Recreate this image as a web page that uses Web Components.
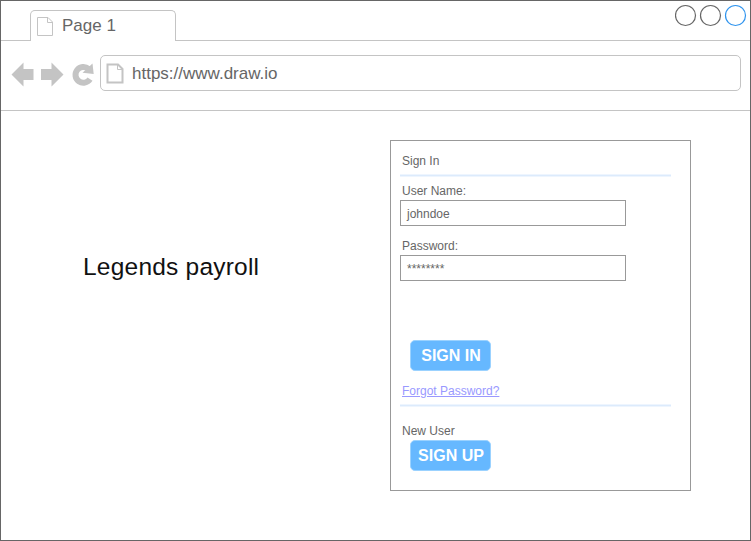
<!DOCTYPE html>
<html lang="en">
<head>
<meta charset="utf-8">
<title>Legends payroll</title>
<style>
html, body { margin: 0; height: 100%; }
body { font-family: "Liberation Sans", Arial, sans-serif; color: #666; background: #fff; overflow: hidden; }
</style>
</head>
<body>
<browser-window>
  <tab-strip slot="chrome">Page 1</tab-strip>
  <address-bar slot="chrome">https://www.draw.io</address-bar>
  <page-title>Legends payroll</page-title>
  <sign-in-card></sign-in-card>
</browser-window>
<script>
function define(name, html) {
  const template = document.createElement('template');
  template.innerHTML = html;
  customElements.define(name, class extends HTMLElement {
    constructor() {
      super();
      this.attachShadow({ mode: 'open' }).append(template.content.cloneNode(true));
    }
  });
}

define('browser-window', `
<style>
:host { display: flex; flex-direction: column; box-sizing: border-box; width: 751px; height: 541px; border: 1px solid #666; background: #fff; }
main { flex: 1; display: flex; align-items: flex-start; justify-content: space-between; padding: 29px 59px 0 82px; }
</style>
<slot name="chrome"></slot>
<main><slot></slot></main>`);

define('page-icon', `
<style>
:host { display: block; flex: none; line-height: 0; color: #c4c4c4; }
svg { display: block; overflow: visible; }
</style>
<svg width="16" height="19" viewBox="0 0 16 19" fill="none" stroke="currentColor">
<path d="M.5 .5H11L15.5 5V18.5H.5Z" style="stroke-width:var(--icon-stroke,1)"/><path d="M10.500 .5V5.500H15.500"/></svg>`);

define('window-controls', `
<style>
:host { display: block; }
svg { display: block; }
</style>
<svg width="72" height="23" viewBox="0 0 72 23" fill="none" stroke="#666" stroke-width="1.2">
<circle cx="10.500" cy="11.500" r="10"/><circle cx="35.500" cy="11.500" r="10"/><circle cx="60.500" cy="11.500" r="10" stroke="#2f94ee"/></svg>`);

define('tab-strip', `
<style>
:host { display: flex; height: 40px; flex: none; font-size: 17px; }
.edge { box-sizing: border-box; width: 29px; border-bottom: 1px solid #c4c4c4; }
.rest { flex: 1; display: flex; justify-content: flex-end; padding: 3px 3px 0 0; }
.tab { box-sizing: border-box; width: 146px; margin-top: 9px; border: 1px solid #c4c4c4; border-bottom: 0; border-radius: 5px 5px 0 0; display: flex; padding: 6px 0 0 6px; gap: 9px; line-height: 20px; }
.tab span { margin-top: -1px; }
</style>
<div class="edge"></div>
<div class="tab"><page-icon></page-icon><span><slot></slot></span></div>
<div class="edge rest"><window-controls></window-controls></div>`);

define('nav-icons', `
<style>
:host { display: block; flex: none; }
svg { display: block; }
</style>
<svg width="84" height="26" viewBox="0 0 84 26" fill="#c4c4c4">
<path d="M.5 12.500L12.500 .5V7H22.500V18H12.500V24.500ZM30 7H40.500V.5L52.500 12.500L40.500 24.500V18H30Z"/>
<path d="M79 17.200A7.900 7.900 0 1 1 77.500 6.800" fill="none" stroke="#c4c4c4" stroke-width="6"/>
<path d="M81.500 1.500L82.700 12L71.500 10.800Z"/></svg>`);

define('address-bar', `
<style>
:host { display: flex; box-sizing: border-box; height: 70px; flex: none; border-bottom: 1px solid #c4c4c4; padding: 14px 9px 0 10px; font-size: 17px; }
nav-icons { margin: 7px 0 0; width: 89px; }
.field { box-sizing: border-box; flex: 1; height: 36px; border: 1px solid #c4c4c4; border-radius: 5px; display: flex; padding: 8px 0 0 6px; gap: 9px; line-height: 20px; }
page-icon { --icon-stroke: 2; }
</style>
<nav-icons></nav-icons>
<div class="field"><page-icon></page-icon><span><slot></slot></span></div>`);

define('page-title', `
<style>:host { display: block; margin-top: 112px; font-size: 24.5px; line-height: 29px; letter-spacing: .22px; color: #111; white-space: nowrap; }</style>
<slot></slot>`);

define('form-field', `
<style>
:host { display: block; height: 55px; }
label { display: block; height: 17px; padding: 0 0 0 2px; }
div { box-sizing: border-box; width: 226px; height: 26px; border: 1px solid #999; padding: 5px 6px; line-height: 16px; }
</style>
<label><slot name="label"></slot></label><div><slot></slot></div>`);

define('form-rule', `<style>:host { display: block; box-sizing: border-box; width: 271px; height: 3px; background: #dcebfc; border: solid #eef5fe; border-width: 1px 0; }</style>`);

define('action-button', `
<style>:host { display: block; box-sizing: border-box; width: 81px; height: 31px; margin-left: 10px; padding-left: 1px; border: 1px solid #9bd2ff; border-radius: 5px; background: #66b8ff; color: #fff; font: bold 16px/29px "Liberation Sans", Arial, sans-serif; text-align: center; white-space: nowrap; }</style>
<slot></slot>`);

define('sign-in-card', `
<style>
:host { display: flex; flex-direction: column; box-sizing: border-box; width: 301px; height: 351px; border: 1px solid #999; padding: 12px 9px 0; font-size: 12px; line-height: 16px; }
.text { padding-left: 2px; height: 16px; }
.link { color: #9999ff; text-decoration: underline; }
form-rule { margin: 5px 0 6px; }
.signin { margin: 47px 0 12px 10px; }
.last { margin: 5px 0 16px; }
.new { height: 17px; }
</style>
<div class="text">Sign In</div>
<form-rule></form-rule>
<form-field><span slot="label">User Name:</span>johndoe</form-field>
<form-field><span slot="label">Password:</span>********</form-field>
<action-button class="signin">SIGN IN</action-button>
<div class="text"><span class="link">Forgot Password?</span></div>
<form-rule class="last"></form-rule>
<div class="text new">New User</div>
<action-button>SIGN UP</action-button>`);
</script>
</body>
</html>
